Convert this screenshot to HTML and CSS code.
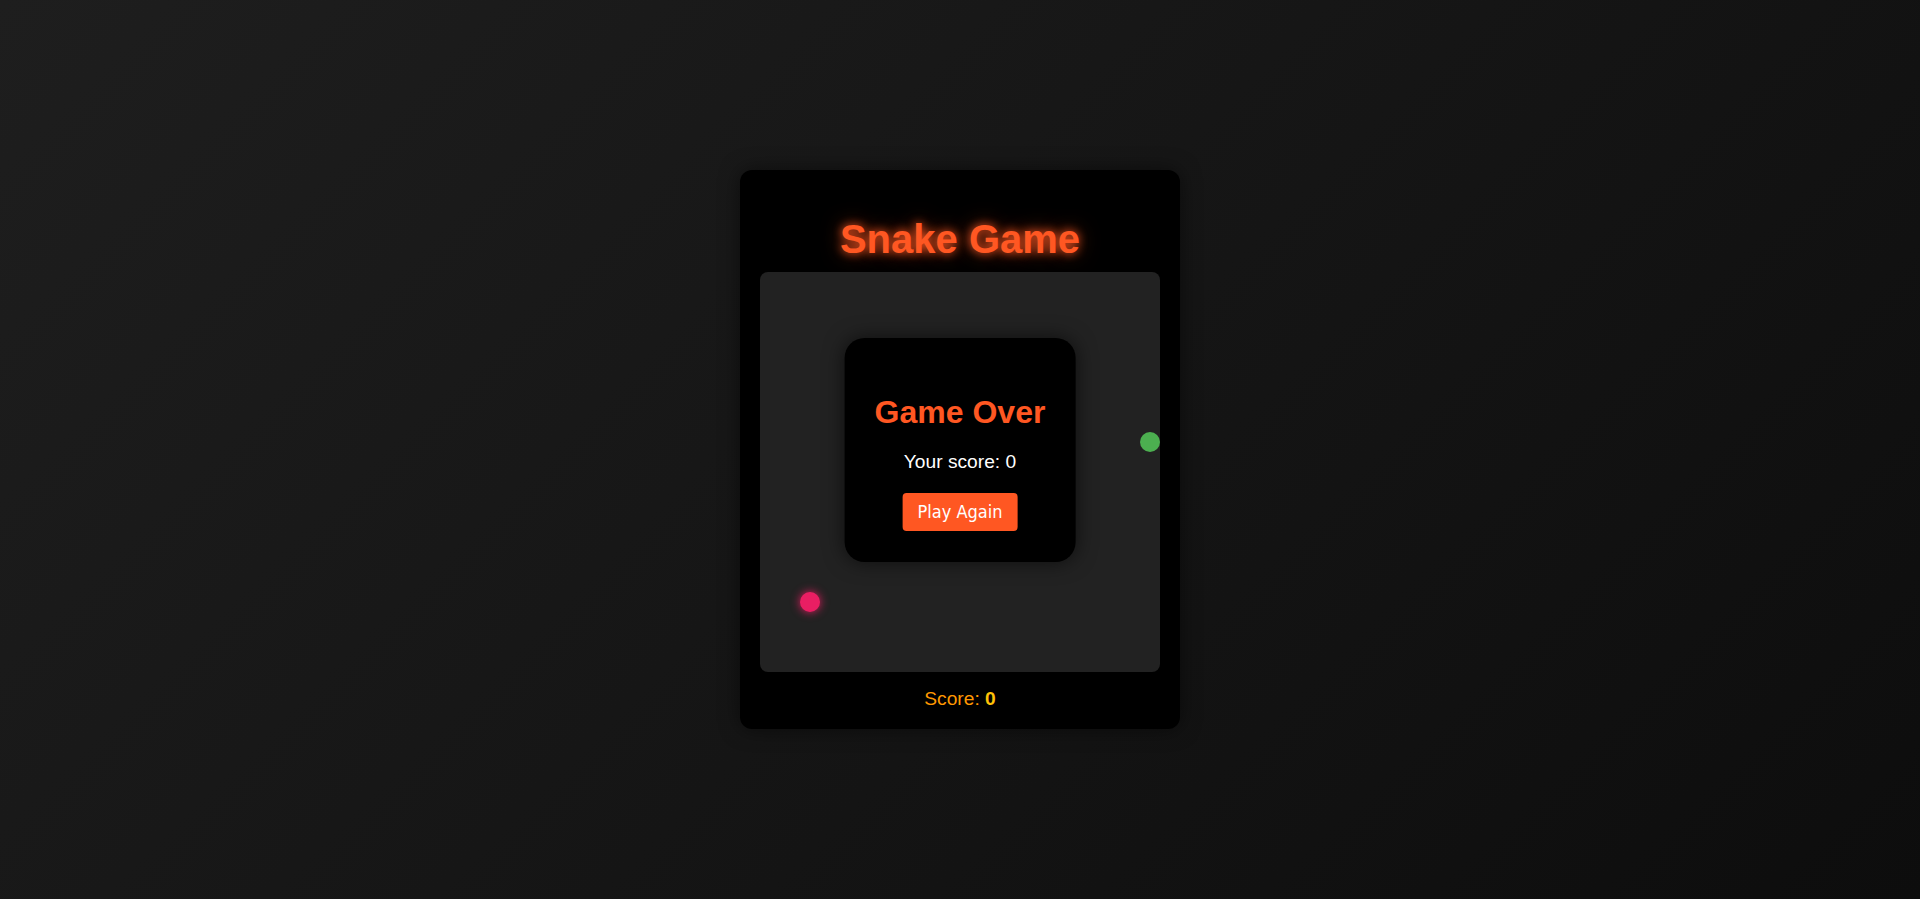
FILE: index.html
```html
<!DOCTYPE html>
<html lang="en">
<head>
<meta charset="utf-8">
<title>Snake Game</title>
<link rel="stylesheet" href="styles.css">
</head>
<body>
  <main class="card">
    <h1 class="title">Snake Game</h1>
    <div class="board">
      <div class="cell food" style="left:380px; top:160px"></div>
      <div class="cell snake" style="left:40px; top:320px"></div>
      <div class="over">
        <h2 class="over-title">Game Over</h2>
        <p class="over-score">Your score: <span>0</span></p>
        <button class="btn">Play Again</button>
      </div>
    </div>
    <div class="score">Score: <span class="score-val">0</span></div>
  </main>
</body>
</html>
```
FILE: styles.css
```css
html, body {
  margin: 0;
  padding: 0;
  height: 100%;
}
body {
  font-family: "Liberation Sans", Arial, sans-serif;
  background: linear-gradient(135deg, #1e1e1e 0%, #0d0d0d 100%);
  display: flex;
  align-items: center;
  justify-content: center;
  min-height: 100vh;
}
.card {
  width: 400px;
  padding: 20px 20px 19px;
  background: #000;
  border-radius: 12px;
  box-shadow: 0 0 20px rgba(0, 0, 0, 0.5);
  display: flex;
  flex-direction: column;
  align-items: center;
}
.title {
  margin: 26px 0 10px;
  font-size: 40px;
  font-weight: bold;
  line-height: 46px;
  color: #ff5722;
  text-shadow: 0 0 10px #ff5722, 0 0 20px rgba(255, 87, 34, 0.5);
}
.board {
  position: relative;
  width: 400px;
  height: 400px;
  background: #222;
  border-radius: 8px;
}
.cell {
  position: absolute;
  width: 20px;
  height: 20px;
  border-radius: 50%;
}
.food {
  background: #4caf50;
}
.snake {
  background: #e91e63;
  box-shadow: 0 0 10px #e91e63;
}
.over {
  position: absolute;
  top: 66px;
  left: 50%;
  transform: translateX(-50%);
  padding: 30px 30px 31px;
  background: #000;
  border-radius: 20px;
  box-shadow: 0 0 20px rgba(0, 0, 0, 0.6);
  display: flex;
  flex-direction: column;
  align-items: center;
  white-space: nowrap;
}
.over-title {
  margin: 26px 0 20px;
  font-size: 32px;
  font-weight: bold;
  line-height: 37px;
  color: #ff5722;
}
.over-score {
  margin: 0 0 20px;
  font-size: 19.2px;
  line-height: 22px;
  color: #fff;
}
.btn {
  font-family: "DejaVu Sans Condensed", "DejaVu Sans", sans-serif;
  font-stretch: condensed;
  font-size: 18px;
  line-height: 22px;
  padding: 8px 15px;
  color: #fff;
  background: #ff5722;
  border: none;
  border-radius: 4px;
  cursor: pointer;
}
.score {
  margin-top: 16px;
  font-size: 19.2px;
  line-height: 22px;
  color: #ff9800;
}
.score-val {
  font-weight: bold;
  color: #ffc107;
}
```
